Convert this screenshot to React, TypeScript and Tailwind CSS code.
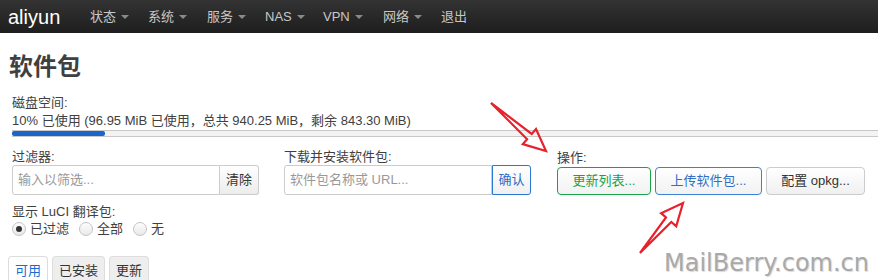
import React from "react";

const FONT = '"Liberation Sans", Arial, "Noto Sans CJK SC", sans-serif';

function arrowPoints(tx: number, ty: number, hx: number, hy: number) {
  const dx = hx - tx;
  const dy = hy - ty;
  const L = Math.sqrt(dx * dx + dy * dy);
  const ux = dx / L;
  const uy = dy / L;
  const nx = -uy;
  const ny = ux;
  const hl = 22;
  const hw = 10;
  const sw = 3.5;
  const bx = hx - ux * hl;
  const by = hy - uy * hl;
  const pts = [
    [tx, ty],
    [bx + nx * sw, by + ny * sw],
    [bx + nx * hw, by + ny * hw],
    [hx, hy],
    [bx - nx * hw, by - ny * hw],
    [bx - nx * sw, by - ny * sw],
  ];
  return pts.map((p) => `${p[0].toFixed(1)},${p[1].toFixed(1)}`).join(" ");
}

function Caret() {
  return (
    <span className="ml-[5px] inline-block h-0 w-0 border-l-[4px] border-r-[4px] border-t-[4px] border-l-transparent border-r-transparent border-t-[#8a8a8a] align-middle" />
  );
}

function NavItem({ label, caret = true, w }: { label: string; caret?: boolean; w: string }) {
  return (
    <div className={`flex items-center text-[13px] text-[#c8c8c8] ${w}`}>
      <span>{label}</span>
      {caret && <Caret />}
    </div>
  );
}

function Radio({ checked, label }: { checked?: boolean; label: string }) {
  return (
    <label className="flex items-center">
      <span className="flex h-[14px] w-[14px] items-center justify-center rounded-full border border-[#c4c4c4] bg-gradient-to-b from-[#fdfdfd] to-[#e9e9e9]">
        {checked && <span className="h-[6px] w-[6px] rounded-full bg-[#333]" />}
      </span>
      <span className="ml-[4px]">{label}</span>
    </label>
  );
}

export default function App() {
  return (
    <div className="relative h-[280px] w-[878px] overflow-hidden bg-white text-[#404040]" style={{ fontFamily: FONT }}>
      {/* navbar */}
      <div className="flex h-[33px] items-center bg-gradient-to-b from-[#333333] to-[#1e1e1e]">
        <div className="ml-[8px] w-[82px] text-[20px] leading-none text-white">aliyun</div>
        <NavItem label="状态" w="w-[58px]" />
        <NavItem label="系统" w="w-[59px]" />
        <NavItem label="服务" w="w-[58px]" />
        <NavItem label="NAS" w="w-[58px]" />
        <NavItem label="VPN" w="w-[60px]" />
        <NavItem label="网络" w="w-[58px]" />
        <NavItem label="退出" caret={false} w="w-[40px]" />
      </div>

      <div className="pl-[12px]">
        <h2 className="-ml-[3px] mt-[19px] text-[24px] font-bold leading-[30px] text-[#404040]">软件包</h2>

        <div className="mt-[12px] text-[13px] leading-[18px]">磁盘空间:</div>
        <div className="text-[13px] leading-[18px]">10% 已使用 (96.95 MiB 已使用，总共 940.25 MiB，剩余 843.30 MiB)</div>
        <div className="h-[7px] w-[900px] border-y border-[#c8c8c8] bg-[#f3f3f3]">
          <div className="h-full w-[93px] rounded-[2px] bg-[#1b66c9]" />
        </div>

        <div className="mt-[11px] flex text-[13px]">
          <div className="w-[247px]">
            <div className="leading-[17px]">过滤器:</div>
            <div className="flex h-[30px]">
              <div className="flex flex-1 items-center rounded-l-[3px] border border-[#cccccc] pl-[5px] text-[#999]">输入以筛选...</div>
              <div className="flex w-[39px] items-center justify-center rounded-r-[3px] border border-l-0 border-[#cccccc] bg-gradient-to-b from-white to-[#ececec] text-[#333]">清除</div>
            </div>
          </div>
          <div className="ml-[25px] w-[247px]">
            <div className="leading-[17px]">下载并安装软件包:</div>
            <div className="flex h-[30px]">
              <div className="flex flex-1 items-center rounded-l-[3px] border border-[#cccccc] pl-[5px] text-[#999]">软件包名称或 URL...</div>
              <div className="flex w-[39px] items-center justify-center rounded-r-[3px] border border-[#2a78d4] bg-gradient-to-b from-white to-[#f0f0f0] text-[#2a6fc9]">确认</div>
            </div>
          </div>
          <div className="ml-[26px]">
            <div className="mt-[1px] leading-[17px]">操作:</div>
            <div className="mt-[1px] flex h-[28px] gap-[4px]">
              <div className="flex w-[94px] items-center justify-center rounded-[4px] border border-[#16a34a] bg-gradient-to-b from-white to-[#f2f2f2] text-[#16a34a]">更新列表...</div>
              <div className="flex w-[107px] items-center justify-center rounded-[4px] border border-[#3b82d6] bg-gradient-to-b from-white to-[#f2f2f2] text-[#2f6fc4]">上传软件包...</div>
              <div className="flex w-[99px] items-center justify-center rounded-[4px] border border-[#cccccc] bg-gradient-to-b from-white to-[#f0f0f0] text-[#333]">配置 opkg...</div>
            </div>
          </div>
        </div>

        <div className="mt-[8px] text-[13px] leading-[18px]">显示 LuCI 翻译包:</div>
        <div className="flex h-[16px] items-center gap-[10px] text-[13px]">
          <Radio checked label="已过滤" />
          <Radio label="全部" />
          <Radio label="无" />
        </div>

        <div className="-ml-[4px] mt-[19px] flex gap-[4px] text-[13px]">
          <div className="flex h-[28px] w-[40px] items-center justify-center rounded-t-[4px] border border-b-0 border-[#dddddd] bg-white text-[#1a6dd0]">可用</div>
          <div className="flex h-[28px] w-[53px] items-center justify-center rounded-t-[4px] border border-b-0 border-[#dddddd] bg-[#eeeeee] text-[#333]">已安装</div>
          <div className="flex h-[28px] w-[40px] items-center justify-center rounded-t-[4px] border border-b-0 border-[#dddddd] bg-[#eeeeee] text-[#333]">更新</div>
        </div>
      </div>

      {/* annotation arrows */}
      <svg className="pointer-events-none absolute left-0 top-0" width="878" height="280">
        <polygon points={arrowPoints(491, 103, 546, 151)} fill="none" stroke="#e8212b" strokeWidth="2.2" strokeLinejoin="miter" />
        <polygon points={arrowPoints(640, 253, 683, 203)} fill="none" stroke="#e8212b" strokeWidth="2.2" strokeLinejoin="miter" />
      </svg>

      {/* watermark */}
      <div
        className="absolute left-[664px] top-[251px] text-[24px] leading-[24px] text-[#a9a9a9] [text-shadow:1px_1px_1px_#d8d8d8]"
        style={{ fontFamily: '"DejaVu Sans", sans-serif' }}
      >
        MailBerry.com.cn
      </div>
    </div>
  );
}
